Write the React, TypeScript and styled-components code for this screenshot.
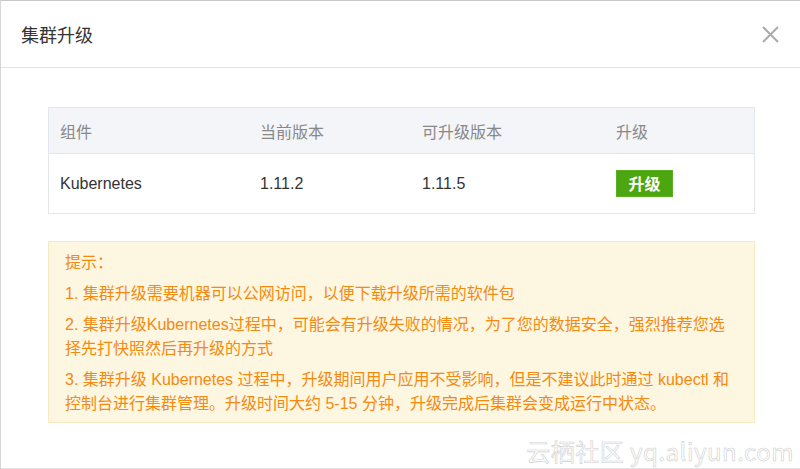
import React from "react";
import styled, { createGlobalStyle } from "styled-components";

const GlobalStyle = createGlobalStyle`
  html, body {
    margin: 0;
    padding: 0;
    background: #ffffff;
  }
  body {
    font-family: "Liberation Sans", "Noto Sans CJK SC", sans-serif;
  }
`;

const Dialog = styled.div`
  position: relative;
  width: 800px;
  height: 469px;
  box-sizing: border-box;
  border-top: 1px solid #c9c9c9;
  border-left: 1px solid #d6d6d6;
  background: #fff;
  overflow: hidden;
  display: flex;
  flex-direction: column;
`;

const Header = styled.div`
  height: 67px;
  box-sizing: border-box;
  border-bottom: 1px solid #e3e3e3;
  display: flex;
  align-items: center;
  justify-content: space-between;
  padding: 0 21px 0 20px;
`;

const Title = styled.h2`
  margin: 0;
  font-size: 18px;
  font-weight: 400;
  color: #333;
`;

const CloseButton = styled.button`
  border: none;
  background: none;
  padding: 0;
  width: 17px;
  height: 17px;
  cursor: pointer;
  display: flex;
`;

const Body = styled.div`
  flex: 1;
  padding: 39px 44px 0 47px;
  display: flex;
  flex-direction: column;
  gap: 27px;
  border-bottom: 1px solid #e3e3e3;
`;

const Table = styled.div`
  border: 1px solid #e3e6ee;
  width: 707px;
  box-sizing: border-box;
`;

const Row = styled.div<{ $head?: boolean }>`
  display: grid;
  grid-template-columns: 200px 162px 194px 1fr;
  align-items: center;
  height: ${({ $head }) => ($head ? "45px" : "59px")};
  padding-left: 11px;
  background: ${({ $head }) => ($head ? "#f4f5f9" : "#fff")};
  border-bottom: ${({ $head }) => ($head ? "1px solid #e3e6ee" : "none")};
  color: ${({ $head }) => ($head ? "#888" : "#333")};
  font-size: 16px;
`;

const Cell = styled.div``;

const UpgradeButton = styled.button`
  font-family: "Noto Sans CJK SC", sans-serif;
  width: 57px;
  height: 27px;
  border: 1px solid #5aae22;
  background: #4ca60f;
  color: #fff;
  font-size: 16px;
  font-weight: 700;
  padding: 0;
  line-height: 25px;
  cursor: pointer;
`;

const Notice = styled.div`
  width: 707px;
  box-sizing: border-box;
  background: #fdf6e1;
  border: 1px solid #f9e8c2;
  padding: 9px 16px 6px 16px;
  color: #f38a12;
  font-size: 16px;
  line-height: 24px;
  display: flex;
  flex-direction: column;
  gap: 7px;
`;

const NoticeLine = styled.p`
  margin: 0;
`;

const Watermark = styled.div`
  position: absolute;
  right: 6px;
  bottom: 1px;
  font-family: "Noto Sans CJK SC", sans-serif;
  font-size: 24px;
  font-weight: 400;
  color: #fff;
  letter-spacing: 0.5px;
  -webkit-text-stroke: 0.6px #cfcfcf;
  pointer-events: none;
`;

const columns = ["组件", "当前版本", "可升级版本", "升级"];

const notices = [
  "提示：",
  "1. 集群升级需要机器可以公网访问，以便下载升级所需的软件包",
  "2. 集群升级Kubernetes过程中，可能会有升级失败的情况，为了您的数据安全，强烈推荐您选择先打快照然后再升级的方式",
  "3. 集群升级 Kubernetes 过程中，升级期间用户应用不受影响，但是不建议此时通过 kubectl 和控制台进行集群管理。升级时间大约 5-15 分钟，升级完成后集群会变成运行中状态。",
];

export default function App() {
  return (
    <>
      <GlobalStyle />
      <Dialog>
        <Header>
          <Title>集群升级</Title>
          <CloseButton aria-label="close">
            <svg width="17" height="17" viewBox="0 0 17 17">
              <path d="M1 1L16 16M16 1L1 16" stroke="#aaaaaa" strokeWidth="2" fill="none" />
            </svg>
          </CloseButton>
        </Header>
        <Body>
          <Table>
            <Row $head>
              {columns.map((c) => (
                <Cell key={c}>{c}</Cell>
              ))}
            </Row>
            <Row>
              <Cell>Kubernetes</Cell>
              <Cell>1.11.2</Cell>
              <Cell>1.11.5</Cell>
              <Cell>
                <UpgradeButton>升级</UpgradeButton>
              </Cell>
            </Row>
          </Table>
          <Notice>
            {notices.map((n) => (
              <NoticeLine key={n}>{n}</NoticeLine>
            ))}
          </Notice>
        </Body>
        <Watermark>云栖社区 yq.aliyun.com</Watermark>
      </Dialog>
    </>
  );
}
